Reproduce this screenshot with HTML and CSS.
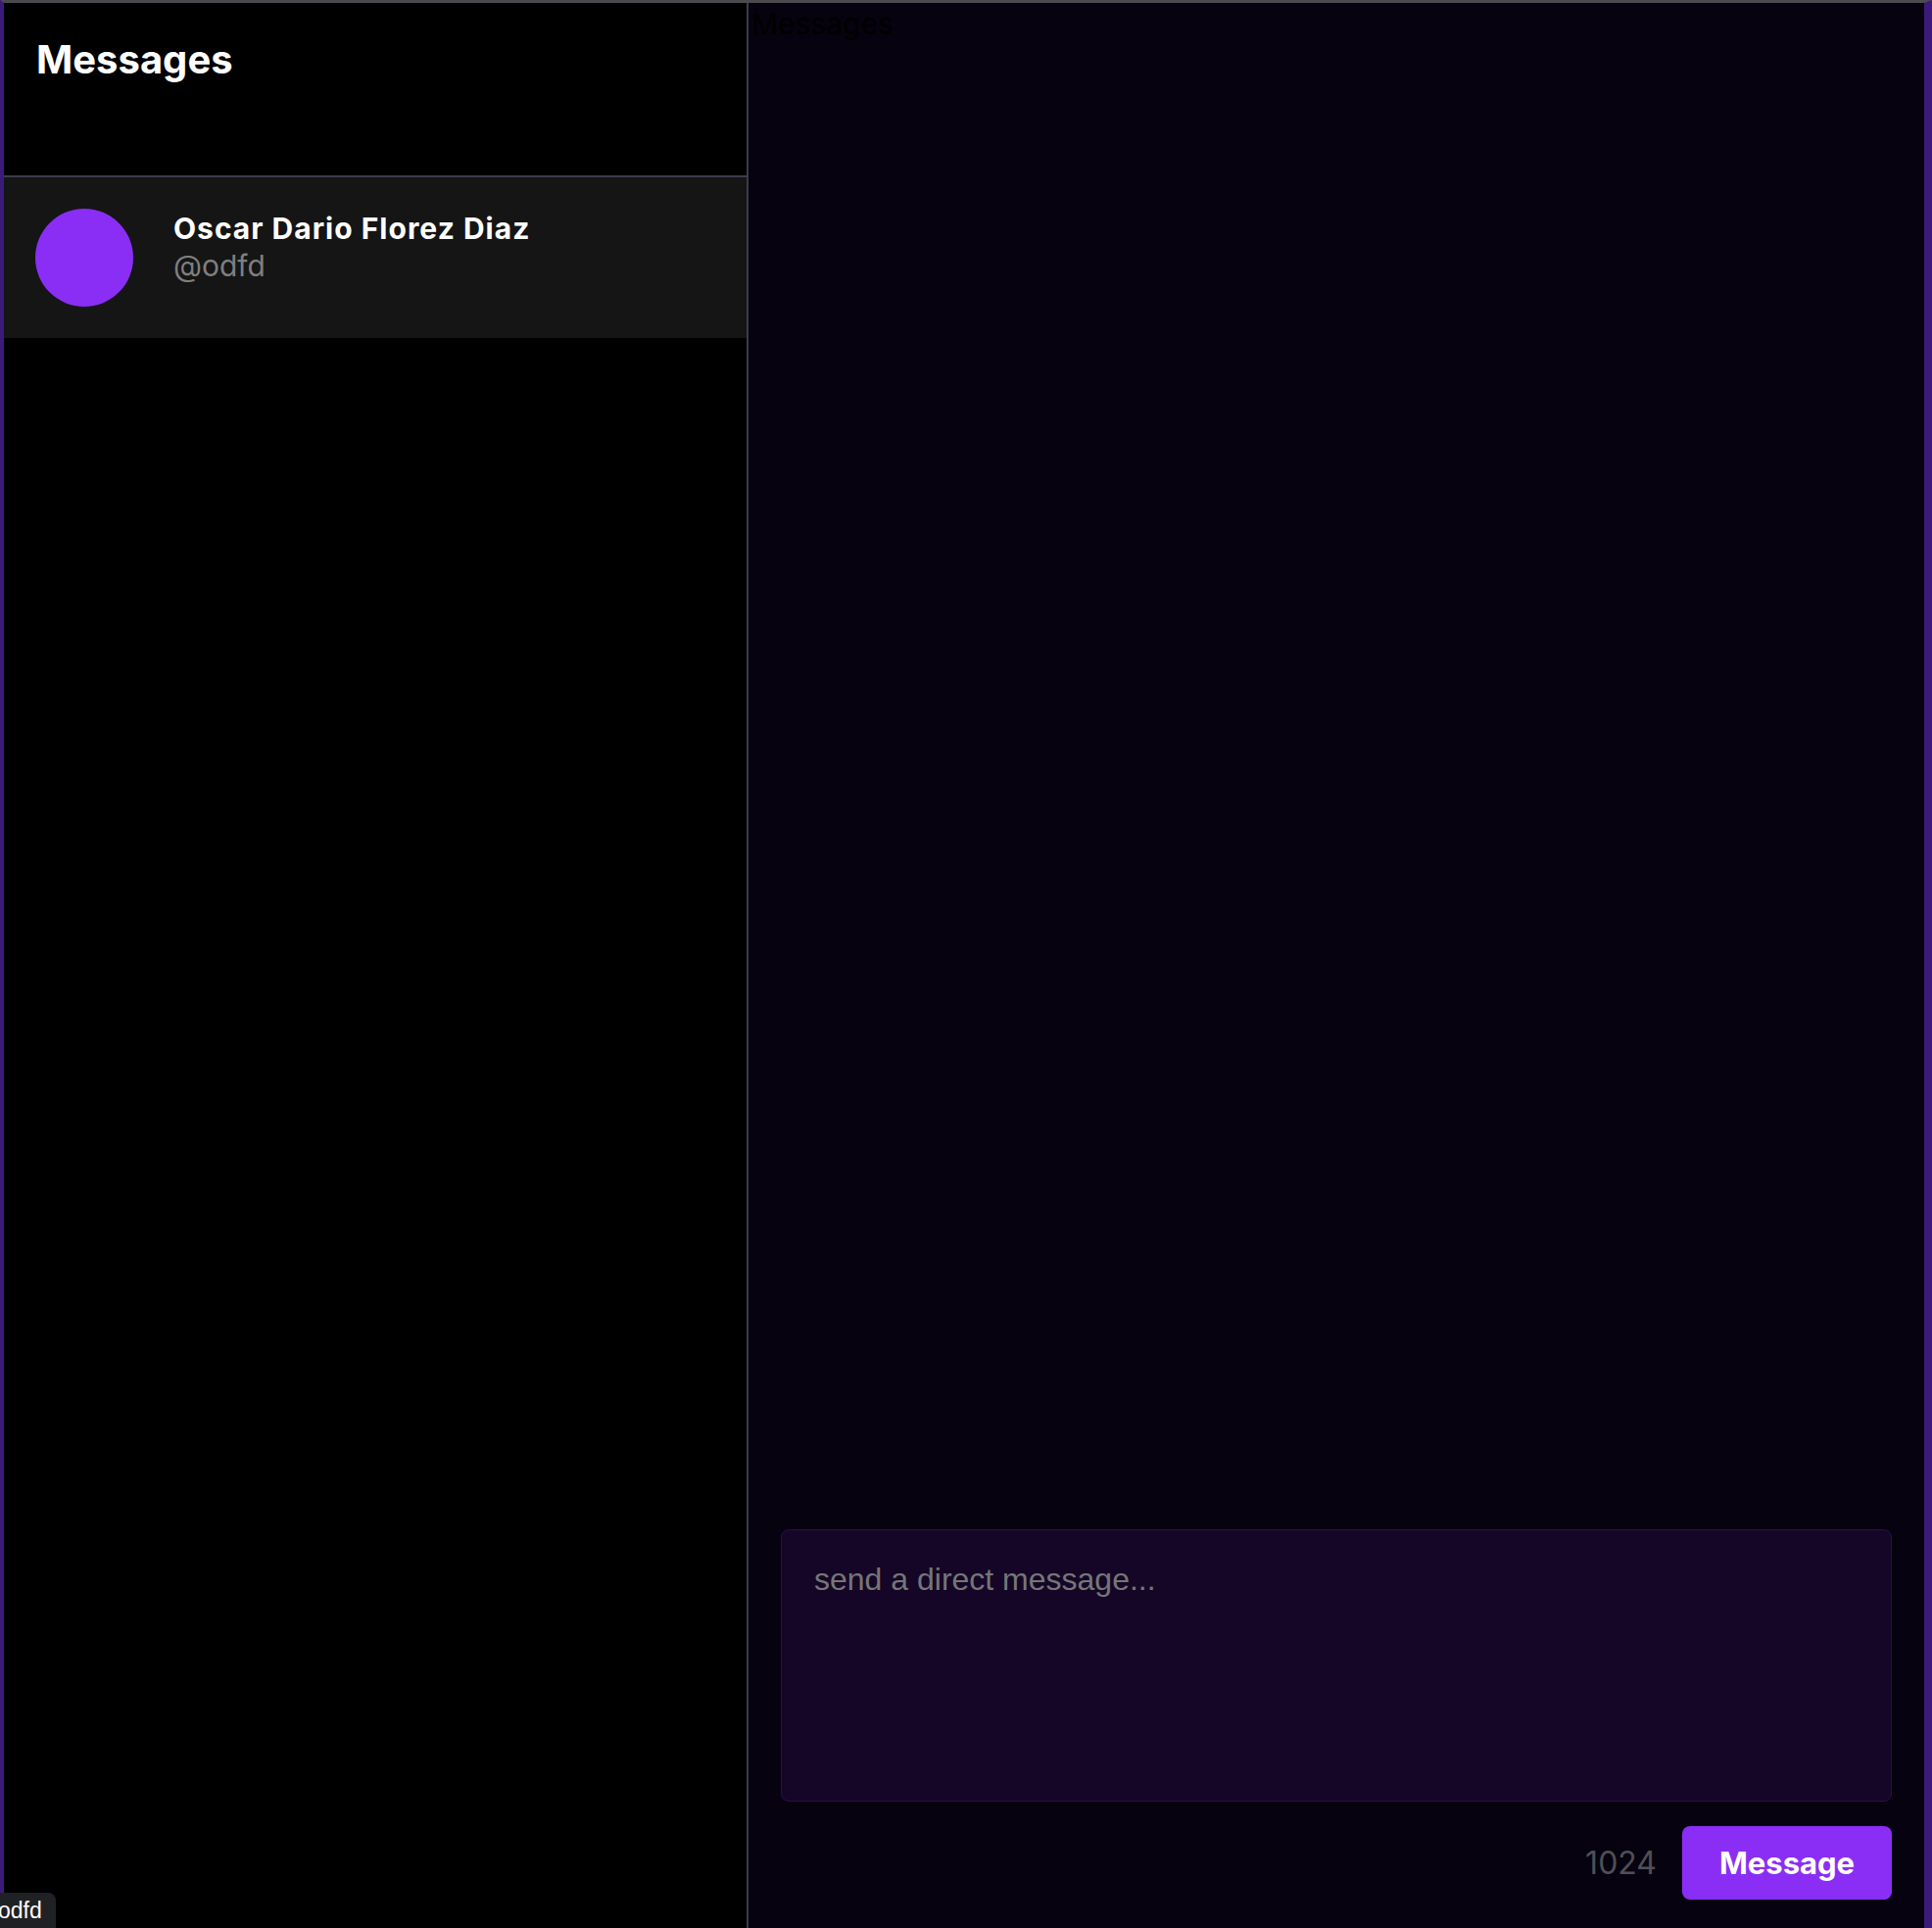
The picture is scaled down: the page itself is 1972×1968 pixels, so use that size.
FILE: index.html
```html
<!DOCTYPE html>
<html lang="en">
<head>
<meta charset="utf-8">
<title>Messages</title>
<link rel="stylesheet" href="styles.css">
</head>
<body>
<div class="app">
  <aside class="sidebar">
    <header class="sidebar-header">
      <h1 class="sidebar-title">Messages</h1>
    </header>
    <ul class="convo-list">
      <li class="convo convo-active">
        <div class="avatar"></div>
        <div class="convo-text">
          <div class="convo-name">Oscar Dario Florez Diaz</div>
          <div class="convo-handle">@odfd</div>
        </div>
      </li>
    </ul>
  </aside>
  <main class="chat">
    <h2 class="chat-title">Messages</h2>
    <div class="chat-log"></div>
    <form class="composer">
      <textarea class="composer-input" placeholder="send a direct message..."></textarea>
      <div class="composer-footer">
        <span class="composer-count">1024</span>
        <button type="button" class="composer-send">Message</button>
      </div>
    </form>
  </main>
</div>
<div class="status-bubble"><span class="status-text">odfd</span></div>
</body>
</html>
```

FILE: styles.css
```css
html, body {
  margin: 0;
  padding: 0;
  background: #000;
}

.app {
  display: flex;
  height: 1968px;
  box-sizing: border-box;
  border-top: 3px solid #4a4a4f;
  border-left: 4px solid #3c1a7c;
  border-right: 8px solid #3c1a7c;
  font-family: Inter, "Noto Sans", sans-serif;
}

.sidebar {
  width: 758px;
  flex: none;
  background: #000;
  border-right: 2px solid #3c3c4c;
  display: flex;
  flex-direction: column;
}

.sidebar-header {
  height: 176px;
  border-bottom: 2px solid #3c3c4c;
}

.sidebar-title {
  margin: 0;
  padding: 34px 33px 0;
  font-size: 40px;
  line-height: 48px;
  font-weight: 700;
  color: #fff;
}

.convo-list {
  list-style: none;
  margin: 0;
  padding: 0;
}

.convo {
  display: flex;
  align-items: flex-start;
  gap: 41px;
  padding: 32px;
  background: #151515;
}

.avatar {
  width: 100px;
  height: 100px;
  border-radius: 50%;
  background: #8a2ef5;
  flex: none;
}

.convo-name {
  font-size: 30px;
  line-height: 40px;
  font-weight: 700;
  letter-spacing: 1px;
  color: #fff;
}

.convo-handle {
  font-size: 30px;
  line-height: 36px;
  font-weight: 400;
  color: #7f7f7f;
}

.chat {
  flex: 1;
  background: #07020f;
  display: flex;
  flex-direction: column;
}

.chat-title {
  margin: 3px 0 0 3px;
  font-size: 30px;
  line-height: 36px;
  font-weight: 400;
  color: #000;
}

.chat-log {
  flex: 1;
}

.composer {
  padding: 0 33px 29px;
  display: flex;
  flex-direction: column;
}

.composer-input {
  display: block;
  width: 100%;
  height: 278px;
  box-sizing: border-box;
  margin: 0;
  border: 1px solid #2a0e4d;
  border-radius: 8px;
  background: #150628;
  padding: 32px 33px;
  font-family: "Liberation Sans", Arial, sans-serif;
  font-size: 32px;
  color: #fff;
  resize: none;
  outline: none;
}

.composer-input::placeholder {
  color: #767676;
}

.composer-footer {
  display: flex;
  justify-content: flex-end;
  align-items: center;
  gap: 26px;
  margin-top: 25px;
}

.composer-count {
  font-size: 32px;
  line-height: 39px;
  color: #4f4f57;
}

.composer-send {
  width: 214px;
  height: 75px;
  border: 0;
  border-radius: 8px;
  background: #8a2ef5;
  color: #fff;
  font-family: Inter, "Noto Sans", sans-serif;
  font-size: 31px;
  line-height: 39px;
  font-weight: 700;
  padding: 0;
}

.status-bubble {
  position: fixed;
  left: 0;
  bottom: 0;
  width: 57px;
  height: 36px;
  overflow: hidden;
  background: #202124;
  border-top-right-radius: 8px;
  font-family: "Liberation Sans", Arial, sans-serif;
  font-size: 23px;
  line-height: 36px;
  color: #fff;
  white-space: nowrap;
}

.status-text {
  margin-left: -2px;
}
```
